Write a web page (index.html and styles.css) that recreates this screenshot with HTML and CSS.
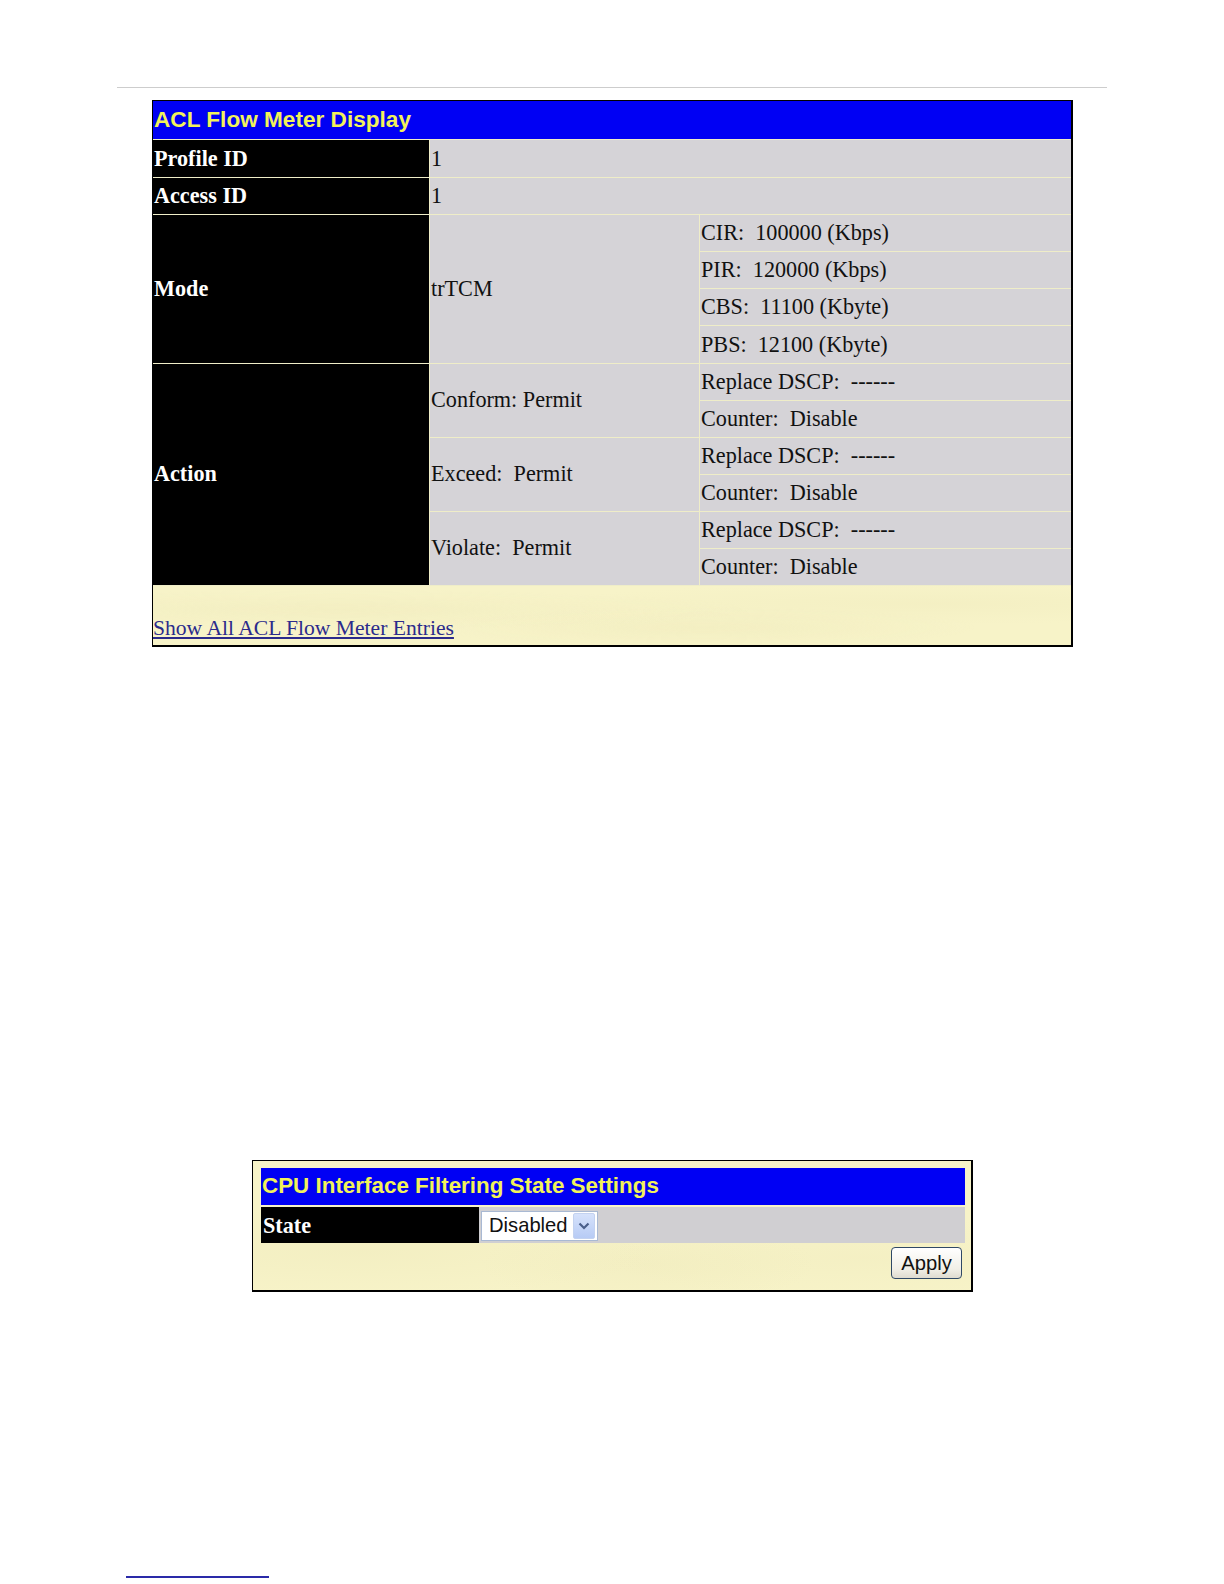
FILE: index.html
```html
<!DOCTYPE html>
<html>
<head>
<meta charset="utf-8">
<title>ACL Flow Meter Display</title>
<link rel="stylesheet" href="styles.css">
</head>
<body>
<div class="page">
<div class="rule"></div>

<table class="acl">
  <colgroup>
    <col class="c1">
    <col class="c2">
    <col class="c3">
  </colgroup>
  <tr class="hrow"><td colspan="3" class="head">ACL Flow Meter Display</td></tr>
  <tr class="r1"><td class="lab">Profile ID</td><td colspan="2" class="val">1</td></tr>
  <tr class="r1"><td class="lab">Access ID</td><td colspan="2" class="val">1</td></tr>
  <tr class="rm"><td rowspan="4" class="lab">Mode</td><td rowspan="4" class="val">trTCM</td><td class="val">CIR:&nbsp; 100000 (Kbps)</td></tr>
  <tr class="rm"><td class="val">PIR:&nbsp; 120000 (Kbps)</td></tr>
  <tr class="rm"><td class="val">CBS:&nbsp; 11100 (Kbyte)</td></tr>
  <tr class="rm"><td class="val">PBS:&nbsp; 12100 (Kbyte)</td></tr>
  <tr class="ra"><td rowspan="6" class="lab">Action</td><td rowspan="2" class="val">Conform: Permit</td><td class="val">Replace DSCP:&nbsp; ------</td></tr>
  <tr class="ra"><td class="val">Counter:&nbsp; Disable</td></tr>
  <tr class="ra"><td rowspan="2" class="val">Exceed:&nbsp; Permit</td><td class="val">Replace DSCP:&nbsp; ------</td></tr>
  <tr class="ra"><td class="val">Counter:&nbsp; Disable</td></tr>
  <tr class="ra"><td rowspan="2" class="val">Violate:&nbsp; Permit</td><td class="val">Replace DSCP:&nbsp; ------</td></tr>
  <tr class="ra"><td class="val">Counter:&nbsp; Disable</td></tr>
  <tr class="rf"><td colspan="3" class="foot"><a href="#" class="link">Show All ACL Flow Meter Entries</a></td></tr>
</table>

<div class="cpu">
  <div class="cpu-head">CPU Interface Filtering State Settings</div>
  <div class="cpu-row">
    <div class="cpu-lab">State</div>
    <div class="cpu-val">
      <div class="select">
        <span class="sel-text">Disabled</span>
        <span class="sel-btn">
          <svg width="12" height="8" viewBox="0 0 12 8"><path d="M1.5 1.5 L6 6 L10.5 1.5" fill="none" stroke="#4a5f8a" stroke-width="2.2"/></svg>
        </span>
      </div>
    </div>
  </div>
  <div class="cpu-btnrow"><span class="apply">Apply</span></div>
</div>

<div class="footline"></div>
</div>
</body>
</html>
```

FILE: styles.css
```css
html, body {
  margin: 0;
  padding: 0;
  background: #ffffff;
  width: 1224px;
  height: 1584px;
  overflow: hidden;
}

.page {
  width: 1224px;
  height: 1584px;
  overflow: hidden;
}

.rule {
  margin: 87px 0 0 117px;
  width: 990px;
  height: 1px;
  background: #cdcdcd;
}

.acl {
  margin: 12px 0 0 152px;
  width: 921px;
  table-layout: fixed;
  border-collapse: separate;
  border-spacing: 0;
  border: 1px solid #000;
  border-right-width: 2px;
  border-bottom-width: 2px;
  background: #f3f0cc;
  font-family: "Liberation Serif", "Times New Roman", serif;
  font-size: 22.2px;
  color: #111;
}

.c1 { width: 276px; }
.c2 { width: 270px; }

.acl td {
  padding: 0 3px 0 2px;
  border-top: 1px solid #efedc8;
  border-left: 1px solid #efedc8;
  white-space: nowrap;
  vertical-align: middle;
  overflow: hidden;
}

.hrow { height: 38.4px; }
.r1 { height: 37.4px; }
.rm { height: 37.1px; }
.ra { height: 37.05px; }
.rf { height: 60.6px; }

.acl td.head {
  border-top: none;
  border-left: none;
  background: #0000f4;
  color: #f2f25a;
  font-family: "Liberation Sans", Arial, sans-serif;
  font-weight: bold;
  font-size: 22.6px;
  padding-left: 1px;
}

.acl td.lab {
  border-left: none;
  background: #000;
  color: #fff;
  font-weight: bold;
  padding-left: 1px;
}

.acl td.val {
  background: #d5d3d7;
  padding-left: 1px;
}

.acl td.foot {
  border-left: none;
  background: #f7f3c8;
  background-image:
    radial-gradient(ellipse at 20% 40%, rgba(232,226,176,0.25), transparent 40%),
    radial-gradient(ellipse at 60% 70%, rgba(232,226,176,0.25), transparent 35%),
    radial-gradient(ellipse at 85% 30%, rgba(232,226,176,0.2), transparent 35%);
  vertical-align: bottom;
  padding: 0 0 4px 0;
}

.link {
  color: #2b2b8c;
  text-decoration: underline;
  font-size: 21.6px;
  line-height: 22px;
}

.cpu {
  margin: 513px 0 0 252px;
  width: 721px;
  box-sizing: border-box;
  border: 1px solid #000;
  border-right-width: 2px;
  border-bottom-width: 2px;
  padding: 7px 6px 0 8px;
  height: 131.4px;
  background: #f7f3c8;
  background-image:
    radial-gradient(ellipse at 15% 70%, rgba(232,226,176,0.25), transparent 35%),
    radial-gradient(ellipse at 55% 80%, rgba(232,226,176,0.25), transparent 30%),
    radial-gradient(ellipse at 85% 75%, rgba(232,226,176,0.2), transparent 30%);
}

.cpu-head {
  height: 36.4px;
  background: #0000f4;
  color: #f2f25a;
  font-family: "Liberation Sans", Arial, sans-serif;
  font-weight: bold;
  font-size: 22.4px;
  line-height: 36.4px;
  padding-left: 1px;
}

.cpu-row {
  margin-top: 2px;
  height: 36.4px;
  display: flex;
}

.cpu-lab {
  width: 216px;
  background: #000;
  color: #fff;
  font-family: "Liberation Serif", "Times New Roman", serif;
  font-weight: bold;
  font-size: 22.2px;
  line-height: 38px;
  padding-left: 2px;
}

.cpu-val {
  flex: 1;
  background: #d0cfd2;
  padding: 4px 0 0 2px;
}

.select {
  width: 117px;
  height: 30px;
  box-sizing: border-box;
  border: 1px solid #a9b9d3;
  background: #fff;
  display: flex;
  align-items: center;
  justify-content: space-between;
  padding: 0 2px 0 7px;
  font-family: "Liberation Sans", Arial, sans-serif;
  font-size: 20.2px;
  color: #111;
}

.sel-btn {
  width: 20px;
  height: 24px;
  background: linear-gradient(#d6e2fb, #b7cbf5);
  border: 1px solid #c3d2f0;
  border-radius: 2px;
  display: flex;
  align-items: center;
  justify-content: center;
}

.cpu-btnrow {
  display: flex;
  justify-content: flex-end;
  margin-top: 4px;
  padding-right: 3px;
}

.apply {
  width: 71px;
  height: 32px;
  box-sizing: border-box;
  border: 1px solid #2f4966;
  border-radius: 4px;
  background: linear-gradient(#ffffff, #f1efe6 70%, #dedbd0);
  font-family: "Liberation Sans", Arial, sans-serif;
  font-size: 20.2px;
  color: #111;
  display: flex;
  align-items: center;
  justify-content: center;
}

.footline {
  margin: 284px 0 0 126px;
  width: 143px;
  height: 2px;
  background: #2a2aa8;
}
```
